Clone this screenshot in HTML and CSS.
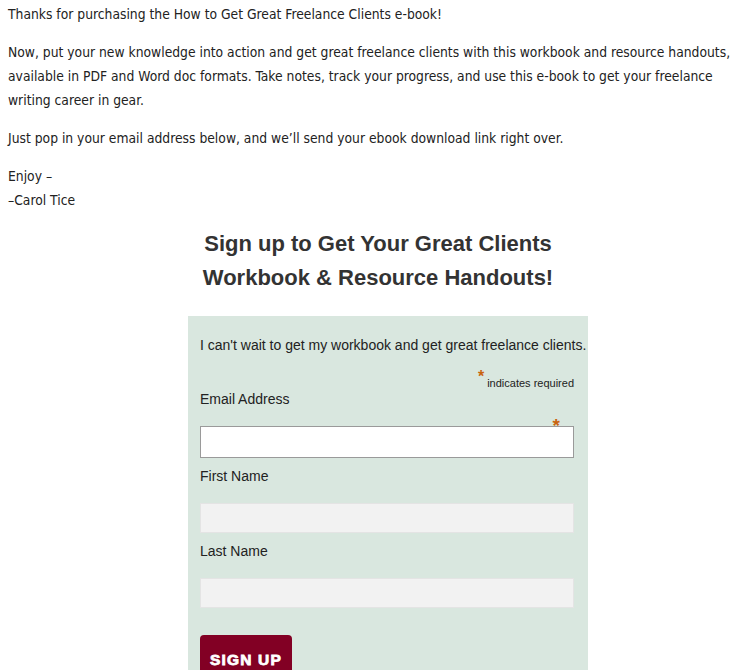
FILE: index.html
```html
<!DOCTYPE html>
<html lang="en">
<head>
  <meta charset="UTF-8" />
  <meta name="viewport" content="width=device-width, initial-scale=1.0" />
  <title>Great Freelance Clients Workbook</title>
  <link rel="stylesheet" href="styles.css">
</head>
<body>
  <div class="entry">
    <p>Thanks for purchasing the How to Get Great Freelance Clients e-book!</p>
    <p>Now, put your new knowledge into action and get great freelance clients with this workbook and resource handouts, available in PDF and Word doc formats. Take notes, track your progress, and use this e-book to get your freelance writing career in gear.</p>
    <p>Just pop in your email address below, and we&rsquo;ll send your ebook download link right over.</p>
    <p>Enjoy &ndash;<br>&ndash;Carol Tice</p>
  </div>

  <div class="signup">
    <h2>Sign up to Get Your Great Clients Workbook &amp; Resource Handouts!</h2>
    <form class="signup-form" onsubmit="return false;">
      <p class="intro">I can't wait to get my workbook and get great freelance clients.</p>
      <div class="required-note"><span class="asterisk">*</span> indicates required</div>

      <div class="field">
        <label for="mce-EMAIL">Email Address <span class="asterisk">*</span></label>
        <input type="email" id="mce-EMAIL" class="email" />
      </div>

      <div class="field">
        <label for="mce-FNAME">First Name</label>
        <input type="text" id="mce-FNAME" />
      </div>

      <div class="field">
        <label for="mce-LNAME">Last Name</label>
        <input type="text" id="mce-LNAME" />
      </div>

      <button type="submit" class="button">SIGN UP</button>
    </form>
  </div>
</body>
</html>
```

FILE: styles.css
```css
body {
  margin: 0;
  padding: 2px 0 0 8px;
  background: #fff;
  color: #222;
  font-family: "DejaVu Sans Condensed", "DejaVu Sans", sans-serif;
  font-size: 13.75px;
  line-height: 24px;
}
.entry p {
  margin: 0 0 14px;
}
.entry p:last-child {
  margin-bottom: 0;
}
.signup {
  width: 400px;
  margin: 15px 0 0 180px;
}
.signup h2 {
  margin: 0 0 21px;
  padding-right: 20px;
  text-align: center;
  font-family: "Liberation Sans", Arial, sans-serif;
  font-size: 22px;
  line-height: 34px;
  font-weight: bold;
  color: #333;
}
.signup-form {
  background: #d9e7df;
  padding: 19px 14px 20px 12px;
  font-family: "Liberation Sans", Helvetica, Arial, sans-serif;
  color: #222;
}
.intro {
  margin: 0;
  font-size: 14px;
  line-height: 20px;
  white-space: nowrap;
}
.required-note {
  margin-top: 20px;
  text-align: right;
  font-size: 11px;
  line-height: 14px;
}
.asterisk {
  color: #c9640f;
  font-size: 16px;
  font-weight: bold;
  position: relative;
  top: -5px;
}
.field {
  position: relative;
  margin-bottom: 9px;
}
.field label {
  display: block;
  font-size: 14px;
  line-height: 18px;
  margin-bottom: 18px;
}
.field label .asterisk {
  position: absolute;
  right: 14px;
  top: 27px;
  font-size: 19px;
}
.field input {
  display: block;
  box-sizing: border-box;
  width: 374px;
  height: 30px;
  margin: 0;
  border: 1px solid #e4e4e4;
  background: #f2f2f2;
  font-size: 14px;
}
.field input.email {
  height: 32px;
  background: #fff;
  border-color: #9a9a9a;
}
.button {
  display: block;
  margin-top: 27px;
  width: 92px;
  height: 40px;
  border: 0;
  border-radius: 4px;
  background: #820024;
  color: #fff;
  font-family: "Liberation Sans", Arial, sans-serif;
  font-size: 15.5px;
  font-weight: bold;
  letter-spacing: 1.2px;
  -webkit-text-stroke: 0.8px #fff;
  padding: 9px 0 0;
  text-align: center;
  line-height: 20px;
}
```
